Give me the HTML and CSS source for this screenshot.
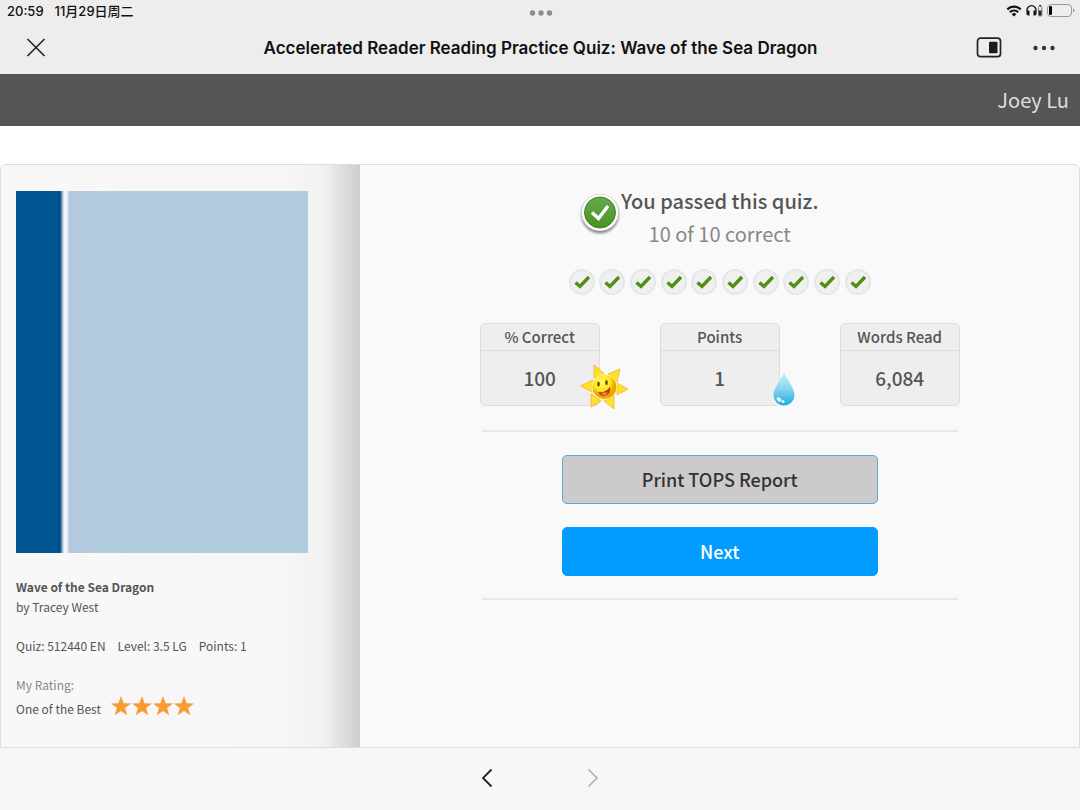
FILE: index.html
```html
<!DOCTYPE html>
<html lang="en">
<head>
    <meta charset="UTF-8">
    <meta name="viewport" content="width=device-width, initial-scale=1.0">
    <title>Accelerated Reader Reading Practice Quiz: Wave of the Sea Dragon</title>
    <link rel="stylesheet" href="styles.css">
</head>
<body>
    <svg class="sprite" aria-hidden="true">
        <symbol id="tick" viewBox="0 0 28 28">
            <circle cx="14" cy="14" r="12" fill="#f0f0f0" stroke="#e5e6e8" stroke-width="2"/>
            <path d="M7.500 14.500l4.500 4 9-9.500" fill="none" stroke="#4f8f14" stroke-width="3.400"/>
        </symbol>
        <symbol id="star" viewBox="0 0 20 20">
            <path d="M10 0l2.600 7.200 7.400.2-5.900 4.500 2.100 7.300L10 15l-6.200 4.200 2.100-7.300L0 7.400l7.400-.2z" fill="#fa9a35"/>
        </symbol>
    </svg>

    <header class="topbar">
        <div class="status">
            <div class="clock"><span>20:59</span><span lang="zh">11月29日周二</span></div>
            <svg class="grabber" width="24" height="6" viewBox="0 0 24 6" fill="#8c8c8c">
                <circle cx="3.500" cy="3" r="2.700"/><circle cx="12" cy="3" r="2.700"/><circle cx="20.500" cy="3" r="2.700"/>
            </svg>
            <div class="indicators">
                <svg width="16" height="12" viewBox="0 0 16 12" fill="none" stroke="#111" stroke-width="2.200">
                    <path d="M1.300 4.400a9.500 9.500 0 0 1 13.400 0M3.900 7.200a5.800 5.800 0 0 1 8.200 0"/>
                    <path d="M8 11.500L5.700 9.200a3.300 3.300 0 0 1 4.600 0z" fill="#111" stroke="none"/>
                </svg>
                <svg width="17" height="13" viewBox="0 0 17 13">
                    <path d="M2.800 10A4.600 4.600 0 1 1 8.200 10" fill="none" stroke="#111" stroke-width="1.300"/>
                    <path d="M1 6.500h2.500v5H2A2 2 0 0 1 .5 9zM10 6.500H7.500v5H9A2 2 0 0 0 10.500 9z" fill="#111"/>
                    <rect x="12.500" y="2.500" width="3.400" height="9.500" rx="1" fill="none" stroke="#777"/>
                    <path d="M13 6.500h2.500v5H13zM13.200 1h2v1h-2z" fill="#222"/>
                </svg>
                <svg width="28" height="13" viewBox="0 0 28 13">
                    <rect x=".5" y=".5" width="24" height="12" rx="3.500" fill="none" stroke="#999"/>
                    <rect x="2" y="2" width="3" height="9" rx="1.200" fill="#000"/>
                    <path d="M26 4.500c2 .8 2 3.200 0 4z" fill="#999"/>
                </svg>
            </div>
        </div>
        <div class="nav">
            <button class="icon-button" aria-label="Close">
                <svg width="20" height="20" viewBox="0 0 20 20" fill="none" stroke="#222" stroke-width="1.600">
                    <path d="M1.500 1l17 17M18.500 1l-17 17"/>
                </svg>
            </button>
            <h1>Accelerated Reader Reading Practice Quiz: Wave of the Sea Dragon</h1>
            <div class="nav-actions">
                <button class="icon-button" aria-label="Floating window">
                    <svg width="26" height="22" viewBox="0 0 26 22">
                        <rect x="1.500" y="1.200" width="23" height="18.500" rx="3" fill="none" stroke="#222" stroke-width="1.700"/>
                        <rect x="13" y="4.800" width="8.500" height="11.500" rx="1" fill="#1c1c1c"/>
                    </svg>
                </button>
                <button class="icon-button" aria-label="More">
                    <svg width="22" height="6" viewBox="0 0 22 6" fill="#333">
                        <circle cx="2.500" cy="3" r="2.200"/><circle cx="11" cy="3" r="2.200"/><circle cx="19.500" cy="3" r="2.200"/>
                    </svg>
                </button>
            </div>
        </div>
    </header>

    <div class="userbar">Joey Lu</div>

    <main class="quiz">
        <section class="book">
            <div class="cover"></div>
            <h2>Wave of the Sea Dragon</h2>
            <p>by Tracey West</p>
            <p class="facts"><span>Quiz: 512440 EN</span><span>Level: 3.5 LG</span><span>Points: 1</span></p>
            <p class="rating-label">My Rating:</p>
            <div class="rating">
                <span>One of the Best</span>
                <span class="stars">
                    <svg><use href="#star"/></svg><svg><use href="#star"/></svg><svg><use href="#star"/></svg><svg><use href="#star"/></svg>
                </span>
            </div>
        </section>

        <section class="result">
            <div class="verdict">
                <svg width="42" height="44" viewBox="0 0 42 44">
                    <defs>
                        <linearGradient id="green" x2="0" y2="1">
                            <stop offset="0" stop-color="#69a851"/><stop offset="1" stop-color="#46941f"/>
                        </linearGradient>
                        <radialGradient id="shade">
                            <stop offset=".8" stop-color="#777"/><stop offset="1" stop-color="#aaa" stop-opacity="0"/>
                        </radialGradient>
                    </defs>
                    <circle cx="21" cy="22.500" r="21" fill="url(#shade)"/>
                    <circle cx="21" cy="20.500" r="18.500" fill="#fff" stroke="#ccc" stroke-width=".6"/>
                    <circle cx="21" cy="20.500" r="15.500" fill="url(#green)" stroke="#3b8420"/>
                    <path d="M13 20.500l6.500 6L29 14" fill="none" stroke="#fff" stroke-width="3.400"/>
                </svg>
                <div>
                    <h2>You passed this quiz.</h2>
                    <p>10 of 10 correct</p>
                </div>
            </div>

            <div class="ticks">
                <svg><use href="#tick"/></svg><svg><use href="#tick"/></svg><svg><use href="#tick"/></svg><svg><use href="#tick"/></svg><svg><use href="#tick"/></svg>
                <svg><use href="#tick"/></svg><svg><use href="#tick"/></svg><svg><use href="#tick"/></svg><svg><use href="#tick"/></svg><svg><use href="#tick"/></svg>
            </div>

            <div class="stats">
                <div class="stat">
                    <h3>% Correct</h3>
                    <strong>100</strong>
                    <svg class="badge sun" viewBox="0 0 48 46">
                        <defs>
                            <radialGradient id="face" cx=".4" cy=".3">
                                <stop offset="0" stop-color="#fff86a"/><stop offset=".7" stop-color="#ffe414"/><stop offset="1" stop-color="#eda900"/>
                            </radialGradient>
                        </defs>
                        <g fill="#fee02c" stroke="#efb532" stroke-width=".8" stroke-linejoin="round">
                            <path d="M14 1l10 8-10 5z"/><path d="M40 5l-3 13-9-8z"/>
                            <path d="M48 25l-11 6V19z"/><path d="M34 45l-10-8 10-5z"/>
                            <path d="M11 43l0-13 10 7z"/><path d="M.5 22l12-6v12z"/>
                        </g>
                        <circle cx="24.500" cy="23" r="12.500" fill="url(#face)" stroke="#fff4a0"/>
                        <ellipse cx="18.500" cy="20" rx="1.300" ry="2.600" fill="#654800"/>
                        <ellipse cx="26.500" cy="18.500" rx="1.300" ry="2.600" fill="#654800"/>
                        <path d="M18 28c5 1 9-1 12-5 1 5-2 9-6 9-3 0-5-2-6-4z" fill="#b9380c"/>
                        <path d="M21 30c2-2 5-2 7-1-2 3-5 3-7 1z" fill="#f47a55"/>
                    </svg>
                </div>
                <div class="stat">
                    <h3>Points</h3>
                    <strong>1</strong>
                    <svg class="badge drop" viewBox="0 0 22 34">
                        <defs>
                            <linearGradient id="water" x2="0" y2="1">
                                <stop offset="0" stop-color="#c8effb"/><stop offset=".5" stop-color="#8cd4f1"/><stop offset="1" stop-color="#18ace0"/>
                            </linearGradient>
                        </defs>
                        <path d="M11 0c2 7 10.500 15 10.500 23.500a10.500 10 0 0 1-21 0C.5 15 9 7 11 0z" fill="url(#water)"/>
                        <ellipse cx="6" cy="27.500" rx="2.500" ry="1.800" transform="rotate(35 6 27.500)" fill="#fff"/>
                        <ellipse cx="10" cy="29.500" rx="1.600" ry="1.600" fill="#e8faff"/>
                    </svg>
                </div>
                <div class="stat">
                    <h3>Words Read</h3>
                    <strong>6,084</strong>
                </div>
            </div>

            <div class="actions">
                <button class="action print">Print TOPS Report</button>
                <button class="action next">Next</button>
            </div>
        </section>
    </main>

    <footer class="pager">
        <button class="icon-button" aria-label="Back">
            <svg width="12" height="20" viewBox="0 0 12 20" fill="none" stroke="#222" stroke-width="1.800"><path d="M10.500 1.500L2 10l8.500 8.500"/></svg>
        </button>
        <button class="icon-button" aria-label="Forward" disabled>
            <svg width="12" height="20" viewBox="0 0 12 20" fill="none" stroke="#b0b0b0" stroke-width="1.600"><path d="M1.500 1.500L10 10l-8.500 8.500"/></svg>
        </button>
    </footer>
</body>
</html>
```

FILE: styles.css
```css
* {
    box-sizing: border-box;
}
body {
    margin: 0;
    min-height: 100vh;
    display: flex;
    flex-direction: column;
    font-family: "Noto Sans CJK SC", "Open Sans", sans-serif;
    color: #555;
    background-color: white;
}
h1, h2, h3, p {
    margin: 0;
}
svg {
    display: block;
    flex-shrink: 0;
}
.sprite {
    position: absolute;
    width: 0;
    height: 0;
}
.icon-button {
    display: block;
    padding: 0;
    border: none;
    background: none;
    cursor: pointer;
}

/* status bar and title */
.topbar {
    background-color: #ededed;
    color: #111;
    font-family: Inter, "Noto Sans CJK SC", sans-serif;
}
.status, .nav {
    display: grid;
    grid-template-columns: 1fr auto 1fr;
    align-items: center;
}
.status {
    height: 22px;
    padding: 0 5px 1px 7px;
}
.clock {
    display: flex;
    gap: 11px;
    font-size: 13px;
    font-weight: 500;
    line-height: 20px;
}
.grabber {
    margin-top: 4px;
}
.indicators {
    display: flex;
    justify-content: flex-end;
    align-items: center;
    gap: 4px;
}
.nav {
    height: 52px;
    padding: 0 25px 0 26px;
}
h1 {
    font-size: 17px;
    font-weight: 600;
    line-height: 24px;
}
.nav-actions {
    display: flex;
    justify-content: flex-end;
    align-items: center;
    gap: 31px;
}
.userbar {
    height: 52px;
    padding: 0 11px;
    background-color: #555;
    color: #ddd;
    font-size: 20px;
    line-height: 52px;
    text-align: right;
}

/* quiz card */
.quiz {
    flex: 1;
    display: grid;
    grid-template-columns: 1fr 2fr;
    margin-top: 38px;
    border: 1px solid #ddd;
    border-radius: 6px 6px 0 0;
    background-color: #f9f9f9;
    overflow: hidden;
}
.book {
    padding: 26px 52px 24px 15px;
    font-size: 12px;
    line-height: 20px;
    background: linear-gradient(to left, #cecece, #e0e0e0 20px, #f1f1f1 36px, #f7f7f7 76px, #f8f8f8);
}
.cover {
    height: 362px;
    margin-bottom: 24px;
    background: linear-gradient(to right, #005792 40px, #004b86 44px, #f2f6fb 48px, #f2f6fb 51px, #b2c8de 53px, #b1cbdf 80px);
}
.book h2 {
    font-size: 12px;
    font-weight: 700;
}
.facts {
    display: flex;
    gap: 12px;
    margin: 19px 0;
}
.rating-label {
    color: #888;
}
.rating {
    display: flex;
    align-items: center;
    gap: 10px;
    line-height: 28px;
}
.stars {
    display: flex;
    gap: 1px;
    padding-bottom: 6px;
}
.stars svg {
    width: 20px;
    height: 20px;
}

/* result */
.result {
    display: flex;
    flex-direction: column;
    align-items: center;
    padding-top: 19px;
}
.verdict {
    display: flex;
    align-items: flex-start;
    padding-right: 42px;
    text-align: center;
}
.verdict svg {
    margin-top: 8px;
}
.verdict h2 {
    font-size: 20px;
    font-weight: 500;
    line-height: 33px;
}
.verdict p {
    color: #888;
    font-size: 20px;
    line-height: 33px;
}
.ticks {
    display: flex;
    justify-content: space-between;
    width: 304px;
    margin-top: 18px;
}
.ticks svg {
    width: 28px;
    height: 28px;
}
.stats {
    display: grid;
    grid-template-columns: repeat(3, 120px);
    gap: 60px;
    margin-top: 27px;
}
.stat {
    position: relative;
    border: 1px solid #ddd;
    border-radius: 5px;
    background-color: #eee;
    text-align: center;
}
.stat h3 {
    border-bottom: 1px solid #ddd;
    font-size: 15px;
    font-weight: 500;
    line-height: 26px;
}
.stat strong {
    display: block;
    font-size: 19px;
    font-weight: 500;
    line-height: 54px;
}
.badge {
    position: absolute;
}
.sun {
    right: -29px;
    bottom: -5px;
    width: 48px;
    height: 46px;
}
.drop {
    right: -16px;
    bottom: -1px;
    width: 22px;
    height: 34px;
}
.actions {
    display: flex;
    flex-direction: column;
    gap: 23px;
    width: 476px;
    margin-top: 24px;
    padding: 23px 80px 22px;
    border: solid #e8e8e8;
    border-width: 2px 0;
}
.action {
    height: 49px;
    padding: 0 0 2px;
    border: 1px solid #019cfd;
    border-radius: 5px;
    font-family: inherit;
    font-size: 18px;
    font-weight: 500;
    cursor: pointer;
}
.print {
    border-color: #55acd5;
    background-color: #cccacb;
    color: #333;
}
.next {
    background-color: #019cfd;
    color: white;
}

.pager {
    display: flex;
    justify-content: center;
    align-items: center;
    gap: 94px;
    height: 62px;
    padding-bottom: 3px;
    background-color: #f7f7f7;
}
```
